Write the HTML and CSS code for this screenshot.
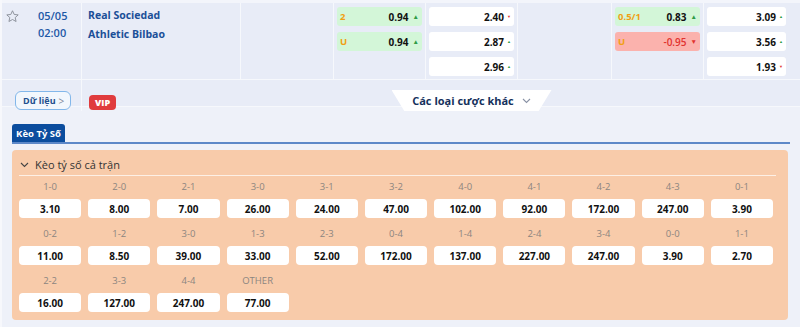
FILE: index.html
```html
<!DOCTYPE html>
<html lang="vi">
<head>
<meta charset="utf-8">
<link rel="stylesheet" href="styles.css">
</head>
<body>
<div class="match">
  <div class="main-row">
    <div class="col info">
      <svg class="star" viewBox="0 0 24 24" width="15" height="15"><path d="M12 2.8l2.7 5.9 6.4.7-4.8 4.3 1.4 6.3L12 16.8 6.3 20l1.4-6.3-4.8-4.3 6.4-.7z" fill="none" stroke="#8a8f99" stroke-width="1.5" stroke-linejoin="round"/></svg>
      <div class="time"><span>05/05</span><span>02:00</span></div>
    </div>
    <div class="col teams"><span>Real Sociedad</span><span>Athletic Bilbao</span></div>
    <div class="col"></div>
    <div class="col odds">
      <div class="cell green"><span class="lbl">2</span><span class="val">0.94</span><span class="up">▲</span></div>
      <div class="cell green"><span class="lbl">U</span><span class="val">0.94</span><span class="up">▲</span></div>
    </div>
    <div class="col odds">
      <div class="cell white"><span class="val">2.40</span><span class="sdown">▼</span></div>
      <div class="cell white"><span class="val">2.87</span><span class="sup">▲</span></div>
      <div class="cell white"><span class="val">2.96</span><span class="sup">▲</span></div>
    </div>
    <div class="col"></div>
    <div class="col odds">
      <div class="cell green"><span class="lbl">0.5/1</span><span class="val">0.83</span><span class="up">▲</span></div>
      <div class="cell red"><span class="lbl">U</span><span class="val neg">-0.95</span><span class="down">▼</span></div>
    </div>
    <div class="col odds last">
      <div class="cell white"><span class="val">3.09</span><span class="sup">▲</span></div>
      <div class="cell white"><span class="val">3.56</span><span class="sup">▲</span></div>
      <div class="cell white"><span class="val">1.93</span><span class="sdown">▼</span></div>
    </div>
  </div>
  <div class="sub-row">
    <div class="col sub-info"><a class="data-btn">Dữ liệu <span class="gt">&gt;</span></a></div>
    <div class="col sub-vip"><span class="vip">VIP</span></div>
    <div class="col sub-more"><div class="more">Các loại cược khác <svg width="9" height="6" viewBox="0 0 9 6"><path d="M1 1l3.5 3.5L8 1" fill="none" stroke="#8a93a6" stroke-width="1.1"/></svg></div></div>
  </div>
</div>

<div class="tabs"><div class="tab">Kèo Tỷ Số</div></div>

<div class="panel">
  <div class="panel-head"><svg width="9" height="6" viewBox="0 0 9 6"><path d="M1 1l3.5 3.5L8 1" fill="none" stroke="#444" stroke-width="1.1"/></svg><span>Kèo tỷ số cả trận</span></div>
  <div class="grid">
    <div class="item"><div class="score">1-0</div><div class="box">3.10</div></div>
    <div class="item"><div class="score">2-0</div><div class="box">8.00</div></div>
    <div class="item"><div class="score">2-1</div><div class="box">7.00</div></div>
    <div class="item"><div class="score">3-0</div><div class="box">26.00</div></div>
    <div class="item"><div class="score">3-1</div><div class="box">24.00</div></div>
    <div class="item"><div class="score">3-2</div><div class="box">47.00</div></div>
    <div class="item"><div class="score">4-0</div><div class="box">102.00</div></div>
    <div class="item"><div class="score">4-1</div><div class="box">92.00</div></div>
    <div class="item"><div class="score">4-2</div><div class="box">172.00</div></div>
    <div class="item"><div class="score">4-3</div><div class="box">247.00</div></div>
    <div class="item"><div class="score">0-1</div><div class="box">3.90</div></div>
    <div class="item"><div class="score">0-2</div><div class="box">11.00</div></div>
    <div class="item"><div class="score">1-2</div><div class="box">8.50</div></div>
    <div class="item"><div class="score">3-0</div><div class="box">39.00</div></div>
    <div class="item"><div class="score">1-3</div><div class="box">33.00</div></div>
    <div class="item"><div class="score">2-3</div><div class="box">52.00</div></div>
    <div class="item"><div class="score">0-4</div><div class="box">172.00</div></div>
    <div class="item"><div class="score">1-4</div><div class="box">137.00</div></div>
    <div class="item"><div class="score">2-4</div><div class="box">227.00</div></div>
    <div class="item"><div class="score">3-4</div><div class="box">247.00</div></div>
    <div class="item"><div class="score">0-0</div><div class="box">3.90</div></div>
    <div class="item"><div class="score">1-1</div><div class="box">2.70</div></div>
    <div class="item"><div class="score">2-2</div><div class="box">16.00</div></div>
    <div class="item"><div class="score">3-3</div><div class="box">127.00</div></div>
    <div class="item"><div class="score">4-4</div><div class="box">247.00</div></div>
    <div class="item"><div class="score">OTHER</div><div class="box">77.00</div></div>
  </div>
</div>
</body>
</html>
```

FILE: styles.css
```css
* { box-sizing: border-box; }
html, body { margin: 0; padding: 0; }
body {
  width: 800px;
  height: 327px;
  overflow: hidden;
  background: #eef1f9;
  font-family: "Open Sans", "Noto Sans", sans-serif;
  border-left: 2px solid #f7f8fc;
}
.match {
  border-top: 3px solid #f3f5fb;
  background: #e8ecf7;
}
.main-row {
  display: grid;
  grid-template-columns: 79px 159px 93px 92px 92px 94px 92px 1fr;
  height: 77px;
  border-bottom: 1px solid #f6f8fc;
}
.sub-row {
  display: grid;
  grid-template-columns: 79px 159px 463px;
  height: 27px;
  border-bottom: 1px solid #f6f8fc;
}
.col { border-left: 1px solid #f6f8fc; }
.col.info, .col.sub-info { border-left: none; }
.col.sub-more { border-left: none; }
.info {
  display: flex;
  padding: 5px 0 0 3px;
}
.star { margin-top: 1px; }
.time {
  display: flex;
  flex-direction: column;
  margin-left: 18px;
  gap: 2px;
  color: #1d58a6;
  font-size: 11px;
  font-weight: 600;
  line-height: 15px;
}
.teams {
  display: flex;
  flex-direction: column;
  padding: 5px 0 0 6px;
  gap: 4px;
  color: #1b4f98;
  font-size: 10.5px;
  font-weight: 700;
  line-height: 15px;
}
.odds {
  display: flex;
  flex-direction: column;
  gap: 6px;
  padding: 4px 3px 0 3px;
}
.odds.last { padding-right: 14px; }
.cell {
  display: flex;
  align-items: center;
  height: 19px;
  border-radius: 3px;
  padding: 0 3px 0 3px;
  font-size: 10px;
  font-weight: 700;
  color: #111;
}
.cell.green { background: #d3f6d8; }
.cell.red { background: #fbb2ad; }
.cell.white { background: #fff; justify-content: flex-end; }
.lbl { color: #f0a014; font-weight: 700; font-size: 9.5px; margin-right: auto; }
.val.neg { color: #e1322f; font-weight: 600; }
.up { color: #2f9b47; font-size: 6.5px; margin-left: 4px; }
.down { color: #e1322f; font-size: 6.5px; margin-left: 4px; }
.sup { color: #2f9b47; font-size: 4px; margin-left: 3px; }
.sdown { color: #e1322f; font-size: 4px; margin-left: 3px; }

.sub-info { padding: 7px 0 0 13px; }
.data-btn {
  display: inline-flex;
  align-items: center;
  gap: 3px;
  height: 19px;
  padding: 0 6px 0 7px;
  border: 1px solid #82b7ea;
  border-radius: 6px;
  background: #f2f7fd;
  color: #1f4f8e;
  font-size: 9px;
  font-weight: 700;
}
.gt { color: #7d8899; font-weight: 400; font-size: 10px; }
.sub-vip { padding: 9px 0 0 7px; }
.vip {
  display: inline-block;
  background: #e03b3d;
  color: #fff;
  font-size: 9px;
  font-weight: 800;
  height: 15px;
  line-height: 15px;
  padding: 0 6px;
  border-radius: 4px;
}
.sub-more {
  display: flex;
  justify-content: center;
  align-items: flex-end;
}
.more {
  width: 160px;
  height: 21px;
  background: #fff;
  clip-path: polygon(0 0, 100% 0, 92% 100%, 8% 100%);
  display: flex;
  align-items: center;
  justify-content: center;
  gap: 8px;
  color: #15315c;
  font-size: 11px;
  font-weight: 700;
}
.tabs {
  margin: 17px 10px 0 10px;
  border-bottom: 2px solid #5d88c8;
  display: flex;
}
.tab {
  width: 53px;
  height: 18px;
  background: #0b4d9e;
  color: #fff;
  font-size: 9.5px;
  font-weight: 700;
  display: flex;
  align-items: center;
  justify-content: center;
  border-radius: 3px 3px 0 0;
}
.panel {
  margin: 6px 10px 0 10px;
  width: 776px;
  height: 170px;
  background: #f8cbaa;
  border-radius: 4px;
  padding: 0 7px;
}
.panel-head {
  display: flex;
  align-items: center;
  gap: 6px;
  height: 26px;
  padding: 4px 0 0 1px;
  border-bottom: 1px solid #fdf0e6;
  margin-right: 5px;
  font-size: 11px;
  color: #333;
}
.grid {
  display: grid;
  grid-template-columns: repeat(11, 1fr);
  column-gap: 7px;
  row-gap: 8px;
  width: 754px;
  padding-top: 3px;
}
.item { display: flex; flex-direction: column; gap: 4px; }
.score {
  height: 16px;
  line-height: 16px;
  text-align: center;
  font-size: 9.5px;
  color: #8c8580;
}
.box {
  height: 19px;
  background: #fff;
  border-radius: 4px;
  display: flex;
  align-items: center;
  justify-content: center;
  font-size: 10px;
  font-weight: 700;
  color: #111;
}
```
